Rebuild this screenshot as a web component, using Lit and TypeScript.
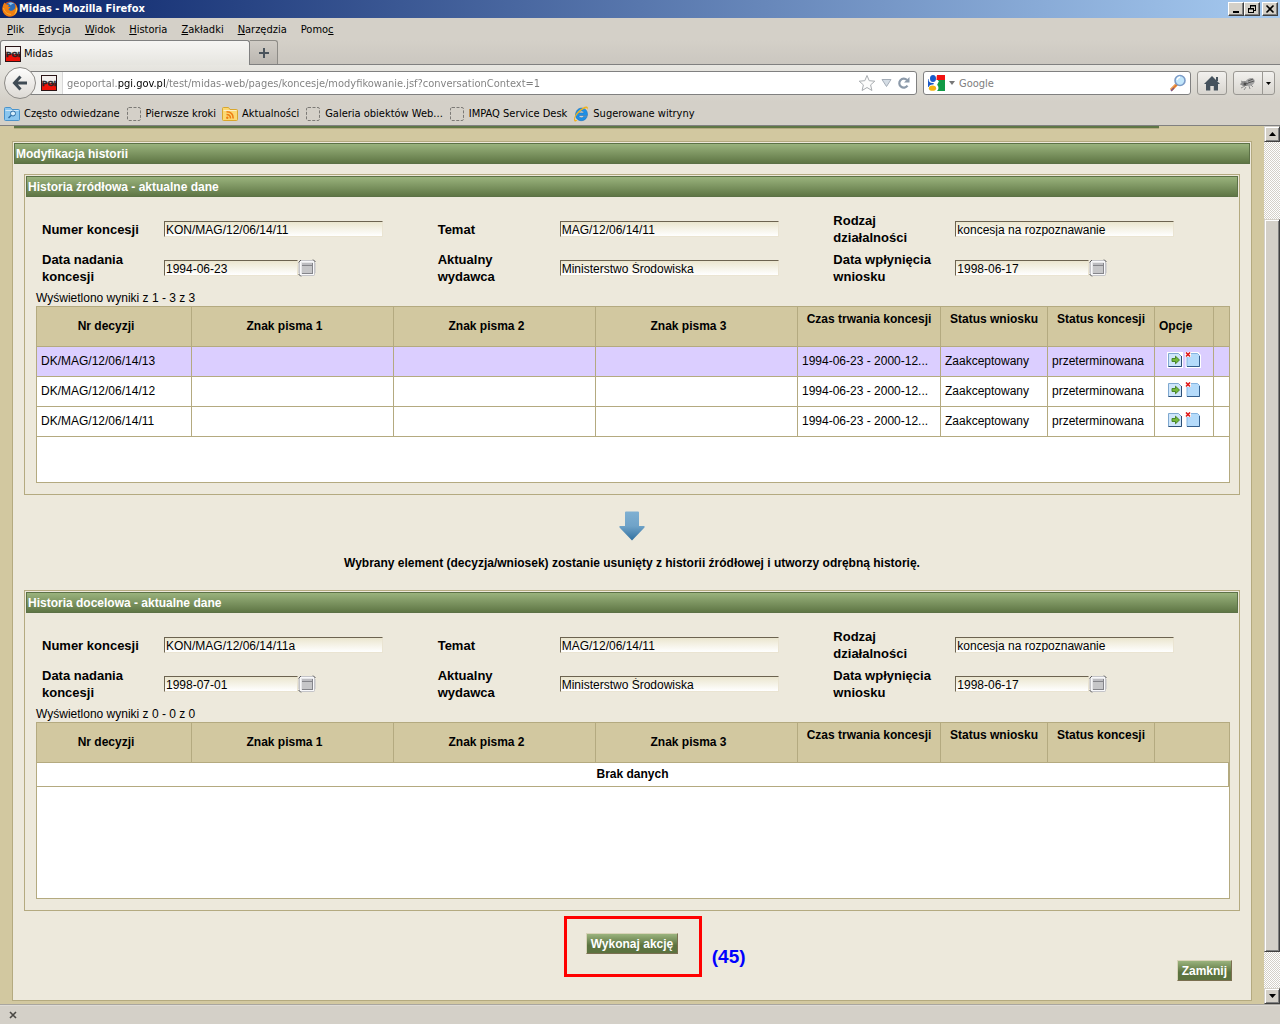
import { LitElement, html, svg, css, nothing } from "lit";
import { customElement, property } from "lit/decorators.js";

interface Field {
  id: string;
  label: string;
  value: string;
  date?: boolean;
}

interface Decision {
  number: string;
  period: string;
  request: string;
  concession: string;
}

const pgiIcon = html`<svg class="icon" width="16" height="16" viewBox="0 0 16 16" aria-hidden="true">
  <rect width="16" height="16" fill="#2a1416" />
  <rect x="1" y="1" width="14" height="7" fill="#f4f0ee" />
  <rect x="1" y="8" width="14" height="7" fill="#ee1208" />
  <text x="8" y="11" text-anchor="middle" font-family="Liberation Sans, Arial, sans-serif" font-size="8" font-weight="bold" fill="#26262a" stroke="#26262a" stroke-width=".5">PGI</text>
</svg>`;

const firefoxIcon = html`<svg width="16" height="16" viewBox="0 0 16 16" aria-hidden="true">
  <circle cx="8" cy="8" r="7.6" fill="#d9480f" />
  <circle cx="8.6" cy="6.4" r="5.4" fill="#2c6cb8" />
  <path d="M6 2c2-1 5-.5 6 1-2-.3-3 .4-3 1.500z" fill="#8fc4ee" />
  <path d="M.6 6C1 3.500 2 2 3 1.400c0 1 .6 1.700 1.500 2.100L7 4 6 5.600l2.500 1-2 1.400c.5 2 3.500 2.500 5.500.6C14 7 13.500 4 12.600 2.600c2.400 1.800 3.300 5 2.400 8C13.500 15 9 16.500 5 15 1.500 13.500 0 9.500.6 6z" fill="#ef7f12" />
  <path d="M15 6c.8 3-.6 6.500-3.400 8.200 1.600-2 2.600-4.200 2.300-6.500z" fill="#fbd04a" />
  <path d="M1.500 7c1 4 4 6.500 7.500 6.300" fill="none" stroke="#f9b233" />
</svg>`;

const folder = (color: string, edge: string, mark: unknown) => html`<svg class="icon" width="16" height="16" viewBox="0 0 16 16" aria-hidden="true">
  <path d="M.5 2.500q0-1 1-1h5l1.500 2h6.500q1 0 1 1v9q0 1-1 1h-13q-1 0-1-1z" fill="${color}" stroke="${edge}" />
  <path d="M1.500 4.500h13" stroke="#fff" stroke-opacity=".6" />
  ${mark}
</svg>`;

const blankIcon = html`<svg class="icon" width="16" height="16" viewBox="0 0 16 16" aria-hidden="true">
  <rect x="1.500" y="1.500" width="13" height="13" rx="1.500" fill="none" stroke="#7c7a76" stroke-dasharray="3 1.500" />
</svg>`;

const ieIcon = html`<svg class="icon" width="16" height="16" viewBox="0 0 16 16" aria-hidden="true">
  <path d="M14.500 9.500H5.800c.2 2.600 3.800 3 4.800.9h3.600C13 13.900 9.600 15.400 6.500 14.400 3 13.200 1.800 9.500 3 6.200 4.400 2.400 8.200 1.200 11.400 2.700c2.500 1.300 3.300 3.800 3.100 6.800zM5.900 6.900h5c-.3-2.600-4.500-2.600-5 0z" fill="#1e90e6" stroke="#0f66b4" stroke-width=".5" />
  <path d="M2.600 15.500C-.5 15.500 1 9.500 5 5.500 9 1.500 14-.9 14.800 1.400c.2.800 0 1.600-.4 2.600.2-2-1-2.400-3.400-1.200C7 5 2.400 10 2 12.800c-.1 1.400 1 1.700 2.800.8-.8.900-1.500 1.900-2.200 1.900z" fill="#f2b21c" />
</svg>`;

const calendarIcon = html`<svg width="18" height="18" viewBox="0 0 18 18" aria-hidden="true">
  <rect x="1" y="1" width="16" height="16" rx="2" fill="#c4c4c8" />
  <path d="M.5 4V14M17.500 4V14" stroke="#d6d4d0" />
  <path d="M.5 3.500L3 1M15 .5L17.500 3M.5 15L3 17.500" stroke="#5c5c5c" />
  <rect x="2.500" y="2.500" width="13" height="13" fill="#e6e6e8" stroke="#f8f8fa" />
  <rect x="4" y="4" width="11" height="11" fill="#a4a4a7" />
  <rect x="4" y="4" width="11" height="2" fill="#bcbcc0" />
  <rect x="4" y="7" width="10" height="7" fill="#c6c6c8" />
  <path d="M4 6.500H14M14.500 4V15M4 14.500H15" stroke="#85858a" />
</svg>`;

const moveIcon = html`<svg width="16" height="16" viewBox="0 0 16 16" aria-hidden="true">
  <rect width="16" height="16" fill="#fff" />
  <path d="M1.500 1.500h10l3 3v10h-13z" fill="#cfe6fb" stroke="#7fa8d0" />
  <path d="M14.500 4v10.500H1.500" fill="none" stroke="#2c4f78" />
  <path d="M5 6.500h3.500V4.200L12.500 8l-4 3.800V9.500H5z" fill="#74b83c" stroke="#3f7f1c" stroke-width=".9" />
</svg>`;

const removeIcon = html`<svg width="16" height="16" viewBox="0 0 16 16" aria-hidden="true">
  <path d="M2 1.500h10.500l2 2v11H2z" fill="#b5dbfb" stroke="#fff" stroke-width="3" />
  <path d="M2 1.500h10.500l2 2v11H2z" fill="#b5dbfb" stroke="#86b4e0" />
  <path d="M14.500 4v10.500H2" fill="none" stroke="#35608f" />
  <rect width="6" height="5" fill="#fff" />
  <path d="M1 .5l4 4M5 .5L1 4.500" stroke="#e01818" stroke-width="1.600" />
</svg>`;

@customElement("history-panel")
export class HistoryPanel extends LitElement {
  @property() heading = "";
  @property() counter = "";
  @property({ attribute: false }) fields: Field[] = [];
  @property({ attribute: false }) rows: Decision[] = [];

  static styles = css`
    :host {
      display: block;
      border: 1px solid #b4aa80;
      padding: 1px 1px 0;
      font: 12px/17px "Liberation Sans", Arial, sans-serif;
      color: #000;
    }
    * {
      box-sizing: border-box;
    }
    .heading {
      margin: 0 0 15px;
      height: 21px;
      padding: 0 1px;
      border: 1px solid #5c7146;
      background: linear-gradient(#9ab37d, #5f7645);
      color: #fff;
      font: bold 12px/20px "Liberation Sans", Arial, sans-serif;
    }
    .fields {
      display: grid;
      grid-template-columns: repeat(3, 1fr);
      row-gap: 5px;
      padding: 0 9px 0 16px;
    }
    .field {
      display: grid;
      grid-template-columns: 122px 1fr;
      align-items: center;
      min-height: 34px;
    }
    .field label {
      font-size: 13px;
      font-weight: bold;
      max-width: 108px;
    }
    .control {
      display: flex;
      align-items: center;
    }
    .control input {
      width: 80%;
      height: 16px;
      padding: 1px 1px 0;
      border: 1px solid #eae4d2;
      border-top-color: #6c6350;
      border-left-color: #6c6350;
      background: linear-gradient(#ebe6cf, #fff);
      font: 12px/13px "Liberation Sans", Arial, sans-serif;
      color: #000;
    }
    .control.date input {
      width: 49%;
    }
    .calendar {
      display: block;
      width: 18px;
      height: 18px;
      padding: 0;
      border: 0;
      background: none;
    }
    .calendar svg,
    .action svg {
      display: block;
    }
    .counter {
      margin: 6px 10px 0;
      line-height: 15px;
    }
    .grid {
      margin: 0 8px 11px 10px;
      min-height: 177px;
      border: 1px solid #b4aa80;
      background: #fff;
    }
    table {
      width: 100%;
      table-layout: fixed;
      border-collapse: separate;
      border-spacing: 0;
    }
    th,
    td {
      padding: 0 4px;
      border: 0 solid #b4aa80;
      border-width: 0 1px 1px 0;
      white-space: nowrap;
      overflow: hidden;
      text-overflow: ellipsis;
    }
    th:last-child,
    .row td:last-child {
      border-right-width: 0;
    }
    th {
      height: 40px;
      padding-bottom: 2px;
      background: #d2c8a0;
      line-height: 16px;
    }
    th.sortable {
      padding-right: 20px;
    }
    th.high {
      vertical-align: top;
      padding-top: 4px;
    }
    th.left {
      text-align: left;
    }
    .row td {
      height: 30px;
    }
    .row.selected td {
      background: #dbceff;
    }
    .actions {
      display: flex;
      justify-content: center;
      gap: 2px;
      padding-bottom: 4px;
    }
    .action {
      padding: 0;
      border: 0;
      background: none;
    }
    .none td {
      height: 24px;
      font-weight: bold;
      text-align: center;
    }
    .c-number {
      width: 155px;
    }
    .c-period {
      width: 143px;
    }
    .c-status {
      width: 107px;
    }
    .c-options {
      width: 59px;
    }
    .c-rest {
      width: 15px;
    }
    .c-wide {
      width: 74px;
    }
  `;

  render() {
    const full = this.rows.length > 0;
    return html`
      <h2 class="heading">${this.heading}</h2>
      <div class="fields">
        ${this.fields.map(
          (f) => html`<div class="field">
            <label for=${f.id}>${f.label}</label>
            <div class="control ${f.date ? "date" : ""}">
              <input id=${f.id} type="text" .value=${f.value} />
              ${f.date ? html`<button class="calendar" aria-label="Kalendarz">${calendarIcon}</button>` : nothing}
            </div>
          </div>`,
        )}
      </div>
      <div class="counter">${this.counter}</div>
      <div class="grid">
        <table>
          <colgroup>
            <col class="c-number" />
            <col /><col /><col />
            <col class="c-period" />
            <col class="c-status" />
            <col class="c-status" />
            ${full ? html`<col class="c-options" /><col class="c-rest" />` : html`<col class="c-wide" />`}
          </colgroup>
          <thead>
            <tr>
              <th class="sortable">Nr decyzji</th>
              <th class="sortable">Znak pisma 1</th>
              <th class="sortable">Znak pisma 2</th>
              <th class="sortable">Znak pisma 3</th>
              <th class="high">Czas trwania koncesji</th>
              <th class="high">Status wniosku</th>
              <th class="high">Status koncesji</th>
              ${full ? html`<th class="left">Opcje</th>` : nothing}
              <th></th>
            </tr>
          </thead>
          <tbody>
            ${full
              ? this.rows.map(
                  (r, i) => html`<tr class="row ${i === 0 ? "selected" : ""}">
                    <td>${r.number}</td>
                    <td></td>
                    <td></td>
                    <td></td>
                    <td>${r.period}</td>
                    <td>${r.request}</td>
                    <td>${r.concession}</td>
                    <td>
                      <div class="actions">
                        <button class="action" aria-label="Przenieś">${moveIcon}</button>
                        <button class="action" aria-label="Usuń">${removeIcon}</button>
                      </div>
                    </td>
                    <td></td>
                  </tr>`,
                )
              : html`<tr class="none"><td colspan="8">Brak danych</td></tr>`}
          </tbody>
        </table>
      </div>
    `;
  }
}

const fieldsFor = (number: string, granted: string): Field[] => [
  { id: "number", label: "Numer koncesji", value: number },
  { id: "subject", label: "Temat", value: "MAG/12/06/14/11" },
  { id: "activity", label: "Rodzaj działalności", value: "koncesja na rozpoznawanie" },
  { id: "granted", label: "Data nadania koncesji", value: granted, date: true },
  { id: "issuer", label: "Aktualny wydawca", value: "Ministerstwo Środowiska" },
  { id: "received", label: "Data wpłynięcia wniosku", value: "1998-06-17", date: true },
];

const decisions: Decision[] = ["13", "12", "11"].map((n) => ({
  number: `DK/MAG/12/06/14/${n}`,
  period: "1994-06-23 - 2000-12...",
  request: "Zaakceptowany",
  concession: "przeterminowana",
}));

const menu: [string, string, string][] = [
  ["", "P", "lik"],
  ["", "E", "dycja"],
  ["", "W", "idok"],
  ["", "H", "istoria"],
  ["", "Z", "akładki"],
  ["", "N", "arzędzia"],
  ["Pomo", "c", ""],
];

const bookmarks = [
  {
    text: "Często odwiedzane",
    icon: folder("#8cc6ee", "#4a93cb", svg`<circle cx="9" cy="7.500" r="2.500" fill="#d8effc" stroke="#2d6da6" /><path d="M7 9.500L4.500 12" stroke="#2d6da6" stroke-width="1.500" />`),
  },
  { text: "Pierwsze kroki", icon: blankIcon },
  {
    text: "Aktualności",
    icon: folder("#fbd873", "#d9a62c", svg`<g fill="none" stroke="#ee7d12" stroke-width="1.600"><path d="M4.500 8.500q4 0 4 4M4.500 5.800q6.700 0 6.700 6.700" /></g><circle cx="5.300" cy="11.700" r="1.200" fill="#ee7d12" />`),
  },
  { text: "Galeria obiektów Web...", icon: blankIcon },
  { text: "IMPAQ Service Desk", icon: blankIcon },
  { text: "Sugerowane witryny", icon: ieIcon },
];

@customElement("app-root")
export class AppRoot extends LitElement {
  static styles = css`
    :host {
      display: flex;
      flex-direction: column;
      min-height: 100vh;
      background: #d4d0c8;
      color: #000;
      font: 11px/14px Tahoma, "DejaVu Sans Condensed", sans-serif;
    }
    * {
      box-sizing: border-box;
    }
    svg {
      display: block;
      flex: none;
    }
    button {
      padding: 0;
      font: inherit;
      color: inherit;
    }
    .titlebar {
      display: flex;
      align-items: center;
      height: 18px;
      padding: 0 2px;
      background: linear-gradient(90deg, #0a246a, #a6caf0);
      color: #fff;
    }
    .title {
      flex: 1;
      margin: 0 0 0 1px;
      font-size: 11px;
      font-weight: bold;
    }
    .window {
      display: flex;
    }
    .window button {
      display: grid;
      place-items: center;
      width: 16px;
      height: 14px;
      border: 1px solid #404040;
      border-top-color: #fff;
      border-left-color: #fff;
      box-shadow: inset -1px -1px #808080;
      background: #d4d0c8;
    }
    .window button:last-child {
      margin-left: 2px;
    }
    .menu {
      display: flex;
      gap: 14px;
      height: 22px;
      padding: 2px 7px 0;
      align-items: center;
    }
    .menu a {
      color: #000;
      text-decoration: none;
    }
    .tabs {
      display: flex;
      height: 25px;
      background: linear-gradient(#d4d0c8, #cbc7c0);
      border-bottom: 1px solid #808080;
    }
    .tab {
      display: flex;
      align-items: center;
      gap: 3px;
      width: 250px;
      margin-bottom: -1px;
      padding: 2px 4px 0;
      border: 1px solid #808080;
      border-bottom: 0;
      border-radius: 3px 3px 0 0;
      background: linear-gradient(#f6f5f3, #e6e5e0);
      text-align: left;
    }
    .newtab {
      display: grid;
      place-items: center;
      width: 28px;
      border: 1px solid #8d8b86;
      border-width: 1px 1px 0 0;
      border-radius: 0 3px 0 0;
      background: linear-gradient(#d0ccc5, #bab6b0);
    }
    .nav {
      display: flex;
      align-items: center;
      gap: 6px;
      height: 36px;
      padding: 0 5px 0 4px;
      background: linear-gradient(#e8e7e2, #d4d0c8);
    }
    .back {
      display: grid;
      place-items: center;
      z-index: 1;
      width: 32px;
      height: 32px;
      margin-right: -17px;
      border: 1px solid #8c8a86;
      border-radius: 50%;
      background: linear-gradient(#fdfdfc, #dddad5);
    }
    .box {
      display: flex;
      align-items: center;
      height: 24px;
      border: 1px solid #808080;
      border-radius: 3px;
      background: #fff;
      color: #7d7d7d;
    }
    .address {
      flex: 1;
      padding: 0 5px 0 0;
      border-radius: 0 3px 3px 0;
    }
    .identity {
      display: grid;
      place-items: center;
      align-self: stretch;
      width: 37px;
      padding-left: 9px;
      border-right: 1px solid #d8d8d8;
      background: #f2f2f0;
    }
    .box input {
      flex: 1;
      min-width: 0;
      padding: 2px 0 0 4px;
      border: 0;
      background: none;
      outline: 0;
      font: inherit;
      color: inherit;
    }
    .box .url {
      background: linear-gradient(90deg, #7d7d7d 54px, #000 54px 103px, #7d7d7d 103px);
      background-clip: text;
      -webkit-text-fill-color: transparent;
    }
    .address button,
    .search button {
      border: 0;
      background: none;
    }
    .address button {
      margin-left: 5px;
    }
    .search {
      flex: 0 0 268px;
      padding: 0 3px 0 4px;
    }
    .search input::placeholder {
      color: #7d7d7d;
    }
    .engine {
      display: flex;
      align-items: center;
      gap: 3px;
    }
    .tool {
      display: flex;
      align-items: center;
      justify-content: center;
      width: 30px;
      height: 24px;
      border: 1px solid #9a9893;
      border-radius: 3px;
      background: linear-gradient(#f2f1ee, #d8d5cf);
    }
    .split {
      display: flex;
    }
    .split .tool:first-child {
      border-radius: 3px 0 0 3px;
    }
    .split .tool:last-child {
      width: 13px;
      margin-left: -1px;
      border-radius: 0 3px 3px 0;
    }
    .bookmarks {
      display: flex;
      gap: 6px;
      height: 25px;
      padding: 2px 4px 0;
      align-items: center;
      border-bottom: 1px solid #808080;
    }
    .bookmarks a {
      display: flex;
      align-items: center;
      gap: 4px;
      color: #000;
      text-decoration: none;
    }
    .viewport {
      display: flex;
      flex: 1;
      font-family: "Liberation Sans", Arial, sans-serif;
    }
    .page {
      flex: 1;
      padding: 0 12px 3px;
      background: #d2c8a0;
    }
    .strip {
      height: 3px;
      margin: 0 93px 12px 2px;
      border-bottom: 1px solid #b4aa80;
      background: #5f7645;
    }
    .panel {
      border: 1px solid #b4aa80;
      padding: 1px 1px 19px;
      background: #ede9dc;
    }
    .heading {
      margin: 0 0 10px;
      height: 21px;
      padding: 0 1px;
      border: 1px solid #5c7146;
      background: linear-gradient(#9ab37d, #5f7645);
      color: #fff;
      font-size: 12px;
      line-height: 20px;
    }
    .body {
      padding: 0 10px;
    }
    .transfer {
      display: flex;
      flex-direction: column;
      align-items: center;
      gap: 14px;
      padding: 16px 0 19px;
    }
    .message {
      margin: 0;
      font-size: 12px;
      font-weight: bold;
      line-height: 16px;
    }
    .run {
      display: flex;
      justify-content: center;
      padding: 22px 0 6px;
    }
    .marked {
      position: relative;
    }
    .frame {
      position: absolute;
      inset: -17px -24px -23px -22px;
      border: 3px solid #f00;
      pointer-events: none;
    }
    .note {
      position: absolute;
      left: 126px;
      top: 14px;
      color: #00f;
      font-size: 19px;
      font-weight: bold;
      line-height: 20px;
    }
    .close {
      display: flex;
      justify-content: flex-end;
      padding-right: 8px;
    }
    .action {
      display: block;
      height: 21px;
      padding: 0 4px;
      border: 1px solid #7a6f50;
      border-top-color: #d8d3b8;
      border-left-color: #d8d3b8;
      background: linear-gradient(#9ab37d, #5c7340 60%);
      color: #fff;
      font-size: 12px;
      font-weight: bold;
      line-height: 18px;
    }
    .scroll {
      display: flex;
      flex-direction: column;
      width: 16px;
      background: repeating-conic-gradient(#fff 0 25%, #d4d0c8 0 50%) 0 0 / 2px 2px;
    }
    .scroll button,
    .thumb {
      border: 1px solid #404040;
      border-top-color: #d4d0c8;
      border-left-color: #d4d0c8;
      box-shadow: inset 1px 1px #fff, inset -1px -1px #808080;
      background: #d4d0c8;
    }
    .scroll button {
      display: grid;
      place-items: center;
      height: 16px;
    }
    .before {
      flex: 77;
    }
    .thumb {
      flex: 733;
    }
    .after {
      flex: 36;
    }
    .addons {
      display: flex;
      align-items: center;
      height: 20px;
      padding: 0 9px;
      border-top: 1px solid #a9a6a0;
      box-shadow: inset 0 1px #dedbd5;
    }
    .addons button {
      border: 0;
      background: none;
    }
  `;

  render() {
    return html`
      <header class="titlebar">
        ${firefoxIcon}
        <h1 class="title">Midas - Mozilla Firefox</h1>
        <div class="window">
          <button aria-label="Minimalizuj"><svg width="10" height="10"><path d="M2 8h6" stroke="#000" stroke-width="2" /></svg></button>
          <button aria-label="Przywróć"><svg width="10" height="10"><path d="M3 1.500h6M3.500 1v3M8.500 1v5M6 6.500h3M1 4.500h6M1.500 4v5M6.500 4v5M1 8.500h6M3 2h6M1 5h6" fill="none" stroke="#000" /></svg></button>
          <button aria-label="Zamknij okno"><svg width="10" height="10"><path d="M1.500 1.500l7 7M8.500 1.500l-7 7" stroke="#000" stroke-width="1.600" /></svg></button>
        </div>
      </header>
      <nav class="menu">${menu.map(([a, b, c]) => html`<a href="#">${a}<u>${b}</u>${c}</a>`)}</nav>
      <div class="tabs">
        <button class="tab">${pgiIcon}Midas</button>
        <button class="newtab" aria-label="Nowa karta"><svg width="12" height="12"><path d="M6 1v10M1 6h10" stroke="#4a545c" stroke-width="2" /></svg></button>
      </div>
      <div class="nav">
        <button class="back" aria-label="Wstecz"><svg width="16" height="16" viewBox="0 0 16 16"><path d="M8.500 1.500L2.500 8l6 6.500M3 8h12" fill="none" stroke="#3f4b54" stroke-width="3" /></svg></button>
        <div class="box address">
          <span class="identity">${pgiIcon}</span>
          <input class="url" type="text" aria-label="Adres" .value=${"geoportal.pgi.gov.pl/test/midas-web/pages/koncesje/modyfikowanie.jsf?conversationContext=1"} />
          <button aria-label="Dodaj zakładkę"><svg width="18" height="18" viewBox="0 0 18 18"><path d="M9 1.500l2.200 5.200 5.600.5-4.200 3.700 1.300 5.600L9 13.500l-4.900 3 1.300-5.600L1.200 7.200l5.600-.5z" fill="#fcfcfc" stroke="#a9adb1" /></svg></button>
          <button aria-label="Historia adresów"><svg width="11" height="10" viewBox="0 0 11 10"><path d="M1 1.500h9L5.500 8.500z" fill="#d5dde5" stroke="#a4adb8" /></svg></button>
          <button aria-label="Odśwież"><svg width="14" height="14" viewBox="0 0 14 14"><path d="M10.500 9.700A4.500 4.500 0 1 1 10 4" fill="none" stroke="#8c9aaa" stroke-width="2.200" /><path d="M12.500 1v5.500H7z" fill="#8c9aaa" /></svg></button>
        </div>
        <div class="box search">
          <button class="engine" aria-label="Wyszukiwarka">
            <svg width="17" height="16" viewBox="0 0 17 16"><rect width="17" height="16" fill="#fff" /><path d="M9 0h8v5H8z" fill="#f21212" /><path d="M10 5h7v11H9q3-3 0-6.500z" fill="#129a46" /><path d="M0 4h3l3 5-4 3H0z" fill="#1c59c4" /><circle cx="4.500" cy="4" r="4" fill="#fff" /><ellipse cx="5" cy="3.500" rx="3" ry="3.500" fill="#1a5ccb" /><path d="M6 8q3-3 5-2l-2 4z" fill="#fff" /><ellipse cx="5" cy="13" rx="4.500" ry="3.500" fill="#fff" /><ellipse cx="4.500" cy="13.200" rx="3.600" ry="2.600" fill="#f3b410" /></svg>
            <svg width="7" height="4"><path d="M1 0h6L4 4z" fill="#777" /></svg>
          </button>
          <input type="search" aria-label="Szukaj" placeholder="Google" />
          <button aria-label="Szukaj w Google"><svg width="18" height="18" viewBox="0 0 18 18"><path d="M2 16l6-6" stroke="#e07c2c" stroke-width="3" /><path d="M1.500 15l5-5" stroke="#f8c08a" /><path d="M2 17l3-3" stroke="#7c5a8c" stroke-width="1.500" /><circle cx="11" cy="6.500" r="5" fill="#c2e6fb" stroke="#7c9cc8" stroke-width="1.600" /><path d="M8 6q.6-2.500 3-3" fill="none" stroke="#fff" stroke-width="1.500" /></svg></button>
        </div>
        <button class="tool" aria-label="Strona startowa"><svg width="16" height="15" viewBox="0 0 16 15"><path d="M8 0l8 8h-2v6.500H9.800V10H6.300v4.500H2V8H0z" fill="#45525d" /><path d="M12 1h2v4h-2z" fill="#45525d" /></svg></button>
        <div class="split">
          <button class="tool" aria-label="Dodatek"><svg width="18" height="15" viewBox="0 0 18 15"><path d="M1 8l4 1M2 12l4-2M5 14l2-3M11 13l-1-3M14 11l-2-2M2 5l4 2" stroke="#8d8d8d" /><ellipse cx="6" cy="7.500" rx="4" ry="2.600" fill="#8a8a8a" /><ellipse cx="11" cy="6" rx="5" ry="3.600" fill="#a2a2a2" transform="rotate(-25 11 6)" /><path d="M9 5l5-2M9 7l6-2M7 7l2 1" stroke="#555" /><circle cx="6" cy="8" r="1.500" fill="#4c4c4c" /></svg></button>
          <button class="tool" aria-label="Opcje dodatku"><svg width="5" height="3"><path d="M0 0h5L2.500 3z" /></svg></button>
        </div>
      </div>
      <nav class="bookmarks">${bookmarks.map((b) => html`<a href="#">${b.icon}${b.text}</a>`)}</nav>
      <div class="viewport">
        <main class="page">
          <div class="strip"></div>
          <section class="panel">
            <h2 class="heading">Modyfikacja historii</h2>
            <div class="body">
              <history-panel heading="Historia źródłowa - aktualne dane" counter="Wyświetlono wyniki z 1 - 3 z 3" .fields=${fieldsFor("KON/MAG/12/06/14/11", "1994-06-23")} .rows=${decisions}></history-panel>
              <div class="transfer">
                <svg width="26" height="30" viewBox="0 0 26 30" aria-hidden="true">
                  <defs><linearGradient id="down" x2="0" y2="1"><stop offset="0" stop-color="#7fb0d2" /><stop offset=".5" stop-color="#70a3c8" /><stop offset="1" stop-color="#2f6f9f" /></linearGradient></defs>
                  <path d="M7 .5h12q1 0 1 1V15h5.500v1.500L13 29.500.5 16.500V15H6V1.500q0-1 1-1z" fill="url(#down)" />
                </svg>
                <p class="message">Wybrany element (decyzja/wniosek) zostanie usunięty z historii źródłowej i utworzy odrębną historię.</p>
              </div>
              <history-panel heading="Historia docelowa - aktualne dane" counter="Wyświetlono wyniki z 0 - 0 z 0" .fields=${fieldsFor("KON/MAG/12/06/14/11a", "1998-07-01")}></history-panel>
              <div class="run">
                <div class="marked">
                  <button class="action">Wykonaj akcję</button>
                  <span class="frame"></span>
                  <span class="note">(45)</span>
                </div>
              </div>
              <div class="close"><button class="action">Zamknij</button></div>
            </div>
          </section>
        </main>
        <div class="scroll">
          <button aria-label="Przewiń w górę"><svg width="7" height="4"><path d="M3.500 0L7 4H0z" /></svg></button>
          <div class="before"></div>
          <div class="thumb"></div>
          <div class="after"></div>
          <button aria-label="Przewiń w dół"><svg width="7" height="4"><path d="M0 0h7L3.500 4z" /></svg></button>
        </div>
      </div>
      <footer class="addons">
        <button aria-label="Zamknij pasek"><svg width="8" height="8"><path d="M1 1l6 6M7 1L1 7" stroke="#4a4844" stroke-width="1.600" /></svg></button>
      </footer>
    `;
  }
}
